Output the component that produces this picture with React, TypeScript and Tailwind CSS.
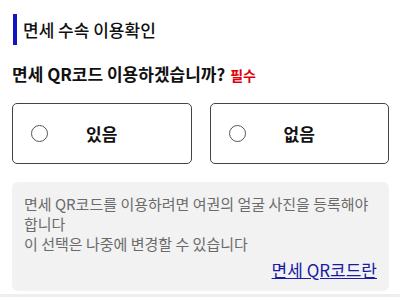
import { useState } from 'react'

const font = { fontFamily: '"Noto Sans CJK KR", "Noto Sans", sans-serif' }

function Choice({ label, checked, onClick }: { label: string; checked: boolean; onClick: () => void }) {
  return (
    <button
      onClick={onClick}
      className="flex h-[61px] items-center rounded-[5px] border border-[#444] bg-white pl-[18px] text-left"
    >
      <span
        className={`h-[17px] w-[17px] shrink-0 rounded-full border border-[#555] ${checked ? 'border-[5px] border-[#1a1ab0]' : ''}`}
      />
      <span className="ml-[38px] text-[17px] font-bold leading-none text-[#111]">{label}</span>
    </button>
  )
}

export default function App() {
  const [value, setValue] = useState<string | null>(null)

  return (
    <div className="h-[305px] w-[400px] overflow-hidden bg-white" style={font}>
      {/* Section title */}
      <div className="flex items-center pl-[13px] pt-[14px]">
        <div className="h-[31px] w-[4px] bg-[#1414c4]" />
        <h2 className="ml-[6px] text-[17px] font-medium text-[#111]">면세 수속 이용확인</h2>
      </div>

      {/* Question */}
      <p className="mt-[17px] flex items-baseline pl-3 text-[17px] font-bold leading-[24px] text-[#111]">
        면세 QR코드 이용하겠습니까?
        <span className="ml-[5px] text-[14px] font-bold text-[#e0000b]">필수</span>
      </p>

      {/* Choices */}
      <div className="mt-[16px] grid grid-cols-2 gap-[18px] pl-3 pr-[11px]">
        <Choice label="있음" checked={value === 'yes'} onClick={() => setValue('yes')} />
        <Choice label="없음" checked={value === 'no'} onClick={() => setValue('no')} />
      </div>

      {/* Notice */}
      <div className="ml-3 mr-[11px] mt-[18px] rounded-[6px] bg-[#f2f2f2] px-3 pb-[9px] pt-[12px]">
        <p className="break-keep text-[15px] leading-[20px] text-[#6b6b6b]">
          면세 QR코드를 이용하려면 여권의 얼굴 사진을 등록해야 합니다
          <br />이 선택은 나중에 변경할 수 있습니다
        </p>
        <div className="mt-[4px] text-right">
          <a href="#" className="text-[17px] leading-[22px] text-[#1a1aa6] underline">
            면세 QR코드란
          </a>
        </div>
      </div>

      <div className="mt-[3px] h-[3px] bg-[#eeeeee]" />
    </div>
  )
}
